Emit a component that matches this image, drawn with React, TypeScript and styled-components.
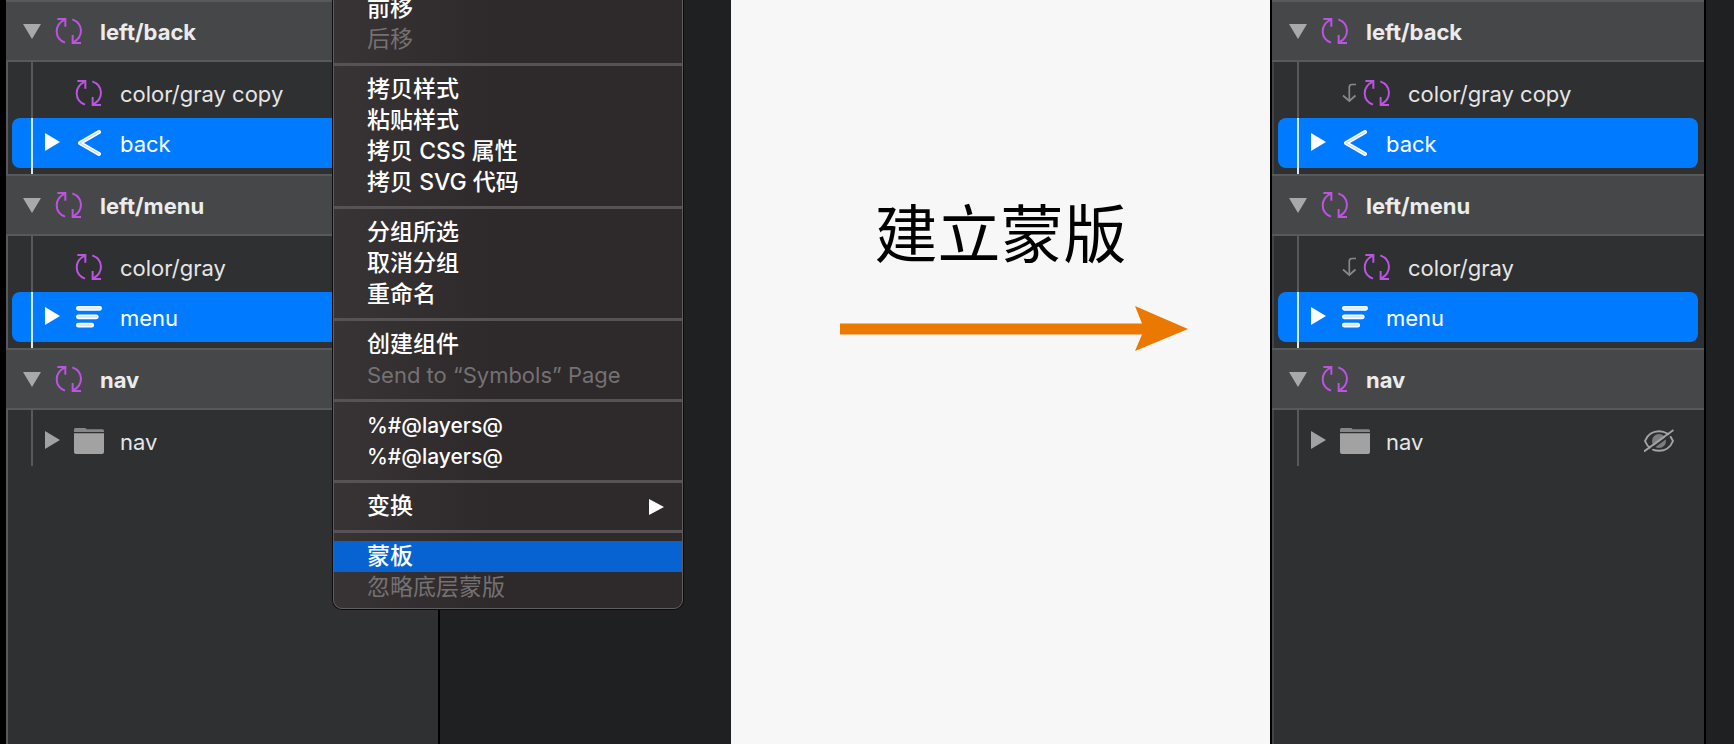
import React from "react";
import styled, { createGlobalStyle, css } from "styled-components";

const sans = `Inter, "Noto Sans CJK SC", "Liberation Sans", sans-serif`;

const GlobalStyle = createGlobalStyle`
  *, *::before, *::after { box-sizing: border-box; }
  body { margin: 0; background: #f7f7f7; font-family: ${sans}; }
  button { font: inherit; color: inherit; background: none; border: 0; padding: 0; margin: 0; text-align: left; cursor: default; }
  ul { list-style: none; margin: 0; padding: 0; }
  svg { display: block; flex: none; }
`;

/* Page */

const Page = styled.main`
  display: flex;
  min-height: 100vh;
`;

const BeforeShot = styled.section`
  position: relative;
  flex: 731 1 0;
  display: flex;
  overflow: hidden;
  background: #1e2021;
`;

const Step = styled.section`
  flex: 539 1 0;
  display: flex;
  flex-direction: column;
  align-items: center;
  gap: 32px;
  padding-top: 186px;
  background: #f7f7f7;
`;

const AfterShot = styled.section`
  flex: 464 1 0;
  display: flex;
  overflow: hidden;
  background: #1e2021;
`;

const DesktopEdge = styled.div`
  flex: none;
  width: 6px;
  background: #000;
`;

const StepTitle = styled.h1`
  margin: 0;
  font-family: "Noto Sans CJK SC", sans-serif;
  font-size: 63px;
  line-height: 88px;
  font-weight: 400;
  color: #000;
  white-space: nowrap;
`;

/* Layer list */

const Panel = styled.div<{ $edge?: boolean }>`
  flex: none;
  width: ${(p) => (p.$edge ? 436 : 434)}px;
  background: #2e3032;
  border-right: 2px solid #000;
  border-left: ${(p) => (p.$edge ? "2px solid #000" : "0")};
  box-shadow: inset 2px 0 ${(p) => (p.$edge ? "#434547" : "#58595b")};
`;

const Header = styled.div`
  display: flex;
  align-items: center;
  height: 62px;
  padding-left: 17px;
  border: solid #58595b;
  border-width: 2px 0;
  background: #464749;
  color: #ececec;
  font-size: 22px;
  line-height: 30px;
  font-weight: 700;
`;

const HeaderName = styled.button`
  margin-left: 17px;
  padding-top: 2px;
`;

const HeaderToggle = styled.button`
  width: 18px;
  margin-right: 14px;
`;

const Children = styled.ul`
  padding: 6px;
`;

const Row = styled.li<{ $selected?: boolean; $first?: boolean }>`
  position: relative;
  display: flex;
  align-items: center;
  height: 50px;
  padding: 0 24px 0 33px;
  border-radius: 8px;
  color: #e6e6e6;
  font-size: 22px;
  line-height: 30px;

  &::before {
    content: "";
    position: absolute;
    left: 19px;
    top: ${(p) => (p.$first ? -6 : 0)}px;
    bottom: ${(p) => (p.$first ? 0 : -6)}px;
    width: 2px;
    background: #58595b;
  }

  ${(p) =>
    p.$selected &&
    css`
      background: #007bff;
      color: #fff;
      &::before {
        background: #d4ebfb;
      }
    `}
`;

const Disclosure = styled.span`
  width: 15px;
  margin-right: 14px;
`;

const MaskSlot = styled.span`
  width: 22px;
`;

const IconSlot = styled.span`
  display: flex;
  justify-content: center;
  width: 30px;
  margin-right: 16px;
`;

const RowName = styled.button`
  flex: 1;
  padding-top: 2px;
`;

/* Context menu */

const Menu = styled.div`
  position: absolute;
  top: -12px;
  left: 333px;
  width: 350px;
  padding: 4px 0 5px;
  border: 1px solid #625d5f;
  border-radius: 0 0 9px 9px;
  background: linear-gradient(90deg, #383335, #2e292a 45%);
  box-shadow: 0 0 0 1px #0c0c0c;
  color: #fff;
  font-size: 23px;
`;

const MenuItem = styled.button<{ $active?: boolean }>`
  display: flex;
  align-items: center;
  justify-content: space-between;
  width: 100%;
  height: 31px;
  padding: 0 18px 0 33px;
  line-height: 31px;
  font-weight: 500;
  white-space: nowrap;
  background: ${(p) => (p.$active ? "#0863d2" : "none")};

  &:disabled {
    color: #757173;
    font-weight: 400;
  }
`;

const Latin = styled.span<{ $small?: boolean }>`
  font-size: ${(p) => (p.$small ? 21 : 22)}px;
`;

const Separator = styled.hr`
  height: 3px;
  margin: 8px 0;
  border: 0;
  background: #575254;
`;

/* Icons */

const SymbolIcon = () => (
  <svg width="28" height="28" viewBox="0 0 84 84" fill="none" stroke="#bb54e0" strokeWidth="6">
    <path d="M30 77C-2 64-4 25 29 8" />
    <path d="M7 6H31V29" />
    <path d="M52 7C86 20 86 59 55 76" />
    <path d="M78 78H53V54" />
  </svg>
);

const TriangleDown = () => (
  <svg width="18" height="15" viewBox="0 0 18 15">
    <path d="M0 0H18L9 15Z" fill="#a9a9aa" />
  </svg>
);

const TriangleRight = ({ color }: { color: string }) => (
  <svg width="15" height="18" viewBox="0 0 15 18">
    <path d="M0 0V18L15 9Z" fill={color} />
  </svg>
);

const SubmenuArrow = () => (
  <svg width="15" height="16" viewBox="0 0 15 16">
    <path d="M0 0V16L15 8Z" fill="#fff" />
  </svg>
);

const BackIcon = () => (
  <svg width="24" height="28" viewBox="0 0 24 28" fill="none" strokeLinecap="round" strokeLinejoin="round">
    <path d="M22 3L3 14L22 25" stroke="#fff" strokeWidth="4" />
    <path d="M22 3L3 14L22 25" stroke="#b5d6fb" strokeWidth="1" />
  </svg>
);

const MenuIcon = () => (
  <svg width="26" height="22" viewBox="0 0 26 22" fill="#d5e9ff" stroke="#fff" strokeWidth="1.5">
    <rect x="0.75" y="0.75" width="24.5" height="3.2" rx="1.6" />
    <rect x="0.75" y="9.2" width="21.2" height="3.2" rx="1.6" />
    <rect x="0.75" y="17.6" width="16.6" height="3.2" rx="1.6" />
  </svg>
);

const FolderIcon = () => (
  <svg width="30" height="26" viewBox="0 0 30 26">
    <path d="M0 4V1.500Q0 0 1.500 0H11Q12 0 12.500 1.300H28.500Q30 1.300 30 3V4Z" fill="#868686" />
    <path d="M0 5.300H30V24Q30 26 28 26H2Q0 26 0 24Z" fill="#a2a2a2" />
  </svg>
);

const MaskIcon = () => (
  <svg width="18" height="20" viewBox="0 0 18 20" fill="none" stroke="#88898a" strokeWidth="1.7">
    <path d="M16 1.500H12Q9.300 1.500 9.300 4V17.500" />
    <path d="M3 12.500L9.300 18L15.500 12.500" />
  </svg>
);

const HiddenIcon = () => (
  <svg width="30" height="24" viewBox="0 0 30 24" fill="none" stroke="#a3a4a5" strokeWidth="2">
    <circle cx="15" cy="12" r="7" fill="#7c7d7e" stroke="none" />
    <path d="M1 12C6 -1 24 -1 29 12C24 25 6 25 1 12Z" />
    <path d="M1.500 24L31 2.500" stroke="#2e3032" strokeWidth="2" />
    <path d="M0 22.500L29.500 1" />
  </svg>
);

const ArrowDrawing = () => (
  <svg width="374" height="46" viewBox="0 0 374 46" fill="#eb7800" aria-hidden="true">
    <path d="M26 17.500H328L321 0L374 23L321 45L328 28.500H26Z" />
  </svg>
);

/* Data */

type Kind = "symbol" | "back" | "menu" | "folder";
interface Layer {
  name: string;
  kind: Kind;
  selected?: boolean;
  masked?: boolean;
  hidden?: boolean;
}
interface Group {
  name: string;
  layers: Layer[];
}

const before: Group[] = [
  {
    name: "left/back",
    layers: [
      { name: "color/gray copy", kind: "symbol" },
      { name: "back", kind: "back", selected: true },
    ],
  },
  {
    name: "left/menu",
    layers: [
      { name: "color/gray", kind: "symbol" },
      { name: "menu", kind: "menu", selected: true },
    ],
  },
  { name: "nav", layers: [{ name: "nav", kind: "folder" }] },
];

const after: Group[] = before.map((group) => ({
  ...group,
  layers: group.layers.map((layer) => ({
    ...layer,
    masked: layer.kind === "symbol",
    hidden: layer.kind === "folder",
  })),
}));

const icons: Record<Kind, React.ReactNode> = {
  symbol: <SymbolIcon />,
  back: <BackIcon />,
  menu: <MenuIcon />,
  folder: <FolderIcon />,
};

interface Entry {
  label: string;
  disabled?: boolean;
  active?: boolean;
  submenu?: boolean;
  latin?: boolean;
}

const menu: Entry[][] = [
  [{ label: "前移" }, { label: "后移", disabled: true }],
  [{ label: "拷贝样式" }, { label: "粘贴样式" }, { label: "拷贝 CSS 属性" }, { label: "拷贝 SVG 代码" }],
  [{ label: "分组所选" }, { label: "取消分组" }, { label: "重命名" }],
  [{ label: "创建组件" }, { label: "Send to “Symbols” Page", disabled: true, latin: true }],
  [
    { label: "%#@layers@", latin: true },
    { label: "%#@layers@", latin: true },
  ],
  [{ label: "变换", submenu: true }],
  [
    { label: "蒙板", active: true },
    { label: "忽略底层蒙版", disabled: true },
  ],
];

const LayerList = ({ groups, edge }: { groups: Group[]; edge?: boolean }) => (
  <Panel $edge={edge}>
    {groups.map((group) => (
      <section key={group.name}>
        <Header>
          <HeaderToggle aria-label={`Collapse ${group.name}`} aria-expanded="true">
            <TriangleDown />
          </HeaderToggle>
          <SymbolIcon />
          <HeaderName>{group.name}</HeaderName>
        </Header>
        <Children>
          {group.layers.map((layer, i) => (
            <Row key={layer.name} $selected={layer.selected} $first={i === 0}>
              <Disclosure>
                {layer.kind !== "symbol" && (
                  <button aria-label={`Expand ${layer.name}`} aria-expanded="false">
                    <TriangleRight color={layer.selected ? "#fff" : "#a2a2a2"} />
                  </button>
                )}
              </Disclosure>
              {layer.masked && (
                <MaskSlot>
                  <MaskIcon />
                </MaskSlot>
              )}
              <IconSlot>{icons[layer.kind]}</IconSlot>
              <RowName>{layer.name}</RowName>
              {layer.hidden && (
                <button aria-label={`Show ${layer.name}`}>
                  <HiddenIcon />
                </button>
              )}
            </Row>
          ))}
        </Children>
      </section>
    ))}
  </Panel>
);

const ContextMenu = () => (
  <Menu role="menu">
    {menu.map((section, i) => (
      <React.Fragment key={i}>
        {i > 0 && <Separator />}
        {section.map((entry, j) => (
          <MenuItem key={j} role="menuitem" disabled={entry.disabled} $active={entry.active}>
            {entry.latin ? <Latin $small={!entry.disabled}>{entry.label}</Latin> : entry.label}
            {entry.submenu && <SubmenuArrow />}
          </MenuItem>
        ))}
      </React.Fragment>
    ))}
  </Menu>
);

export default function App() {
  return (
    <Page>
      <GlobalStyle />
      <BeforeShot>
        <DesktopEdge />
        <LayerList groups={before} />
        <ContextMenu />
      </BeforeShot>
      <Step>
        <StepTitle>建立蒙版</StepTitle>
        <ArrowDrawing />
      </Step>
      <AfterShot>
        <LayerList groups={after} edge />
      </AfterShot>
    </Page>
  );
}
